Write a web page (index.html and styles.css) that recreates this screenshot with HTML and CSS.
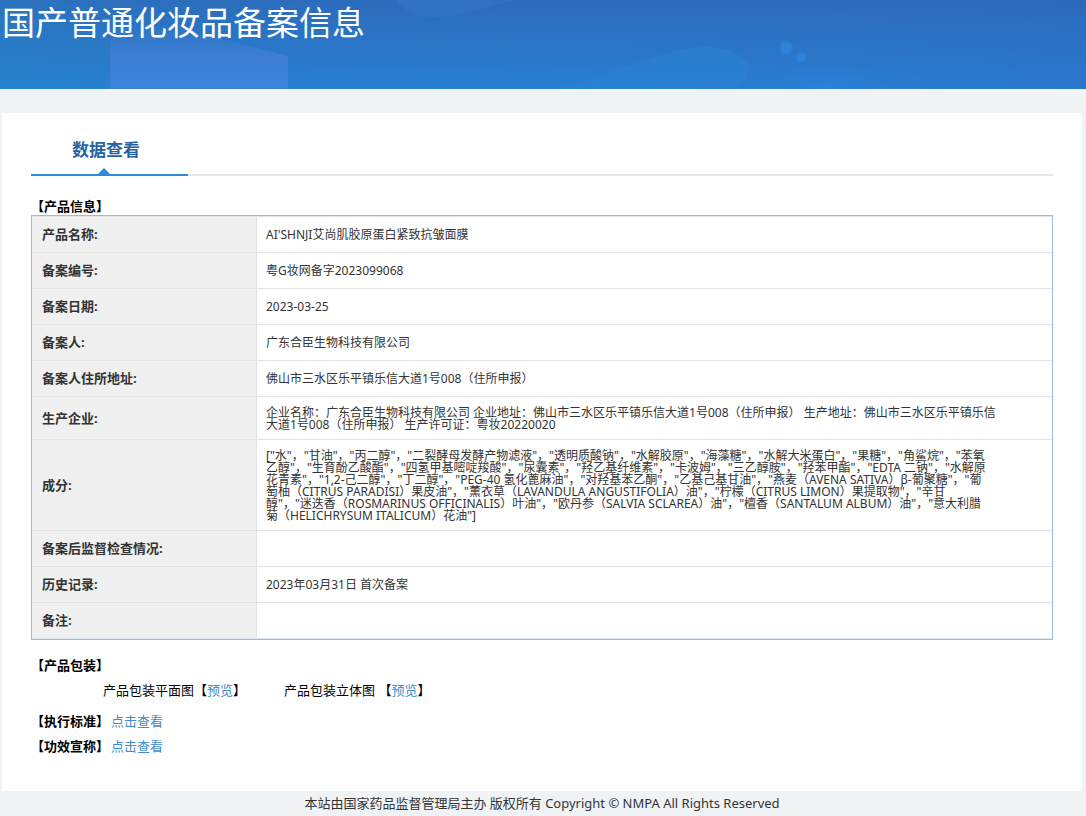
FILE: index.html
```html
<!DOCTYPE html>
<html lang="zh-CN">
<head>
    <meta charset="UTF-8">
    <meta name="viewport" content="width=device-width, initial-scale=1.0">
    <title>国产普通化妆品备案信息</title>
    <link rel="stylesheet" href="styles.css">
</head>
<body>

    <header class="banner">
        <svg class="banner-bg" viewBox="0 0 1086 89" preserveAspectRatio="none" aria-hidden="true">
            <defs>
                <linearGradient id="sky" x1="0" y1="0" x2="0" y2="1">
                    <stop offset="0" stop-color="#2d6abb"/>
                    <stop offset="1" stop-color="#2880d2"/>
                </linearGradient>
                <linearGradient id="shade" x1="0" y1="0" x2="1" y2="0">
                    <stop offset="0" stop-color="#258ac4" stop-opacity="0.25"/>
                    <stop offset="0.4" stop-color="#2a78cc" stop-opacity="0"/>
                    <stop offset="1" stop-color="#2d66c0" stop-opacity="0.3"/>
                </linearGradient>
                <linearGradient id="block" x1="0" y1="0" x2="0" y2="1">
                    <stop offset="0" stop-color="#3c79cc" stop-opacity="0"/>
                    <stop offset="0.5" stop-color="#3c7dd2"/>
                    <stop offset="1" stop-color="#3d83db"/>
                </linearGradient>
                <radialGradient id="glow">
                    <stop offset="0" stop-color="#2d82e0" stop-opacity="0.7"/>
                    <stop offset="1" stop-color="#2d82e0" stop-opacity="0"/>
                </radialGradient>
                <radialGradient id="dot">
                    <stop offset="0.6" stop-color="#2c88de" stop-opacity="0.8"/>
                    <stop offset="1" stop-color="#2c88de" stop-opacity="0"/>
                </radialGradient>
            </defs>
            <rect width="1086" height="89" fill="url(#sky)"/>
            <rect width="1086" height="89" fill="url(#shade)"/>
            <path d="M110 22 L180 28 L288 56 V89 H110 Z" fill="url(#block)"/>
            <path d="M396 0 C406 15 424 18 440 17 C462 16 486 6 515 0 Z" fill="#3a80cc" opacity="0.3"/>
            <path d="M558 89 C610 74 645 59 680 50 C708 43 742 48 748 66 C750 76 742 85 730 89 Z" fill="#2b87d4" opacity="0.4"/>
            <ellipse cx="828" cy="89" rx="55" ry="28" fill="url(#glow)"/>
            <circle cx="786" cy="48" r="8" fill="url(#dot)"/>
            <circle cx="801" cy="57" r="6" fill="url(#dot)"/>
        </svg>
        <h1>国产普通化妆品备案信息</h1>
    </header>

    <main class="panel">
        <div class="tabs">
            <h2 class="tab">数据查看</h2>
        </div>

        <h3>【产品信息】</h3>
        <table class="info">
            <tr><th scope="row">产品名称:</th><td>AI'SHNJI艾尚肌胶原蛋白紧致抗皱面膜</td></tr>
            <tr><th scope="row">备案编号:</th><td>粤G妆网备字2023099068</td></tr>
            <tr><th scope="row">备案日期:</th><td>2023-03-25</td></tr>
            <tr><th scope="row">备案人:</th><td>广东合臣生物科技有限公司</td></tr>
            <tr><th scope="row">备案人住所地址:</th><td>佛山市三水区乐平镇乐信大道1号008（住所申报）</td></tr>
            <tr><th scope="row">生产企业:</th><td class="long">企业名称：广东合臣生物科技有限公司 企业地址：佛山市三水区乐平镇乐信大道1号008（住所申报） 生产地址：佛山市三水区乐平镇乐信<br>大道1号008（住所申报） 生产许可证：粤妆20220020</td></tr>
            <tr>
                <th scope="row">成分:</th>
                <td class="long">["水"，"甘油"，"丙二醇"，"二裂酵母发酵产物滤液"，"透明质酸钠"，"水解胶原"，"海藻糖"，"水解大米蛋白"，"果糖"，"角鲨烷"，"苯氧<br>
                乙醇"，"生育酚乙酸酯"，"四氢甲基嘧啶羧酸"，"尿囊素"，"羟乙基纤维素"，"卡波姆"，"三乙醇胺"，"羟苯甲酯"，"EDTA 二钠"，"水解原<br>
                花青素"，"1,2-己二醇"，"丁二醇"，"PEG-40 氢化蓖麻油"，"对羟基苯乙酮"，"乙基己基甘油"，"燕麦（AVENA SATIVA）β-葡聚糖"，"葡<br>
                萄柚（CITRUS PARADISI）果皮油"，"薰衣草（LAVANDULA ANGUSTIFOLIA）油"，"柠檬（CITRUS LIMON）果提取物"，"辛甘<br>
                醇"，"迷迭香（ROSMARINUS OFFICINALIS）叶油"，"欧丹参（SALVIA SCLAREA）油"，"檀香（SANTALUM ALBUM）油"，"意大利腊<br>
                菊（HELICHRYSUM ITALICUM）花油"]</td>
            </tr>
            <tr><th scope="row">备案后监督检查情况:</th><td></td></tr>
            <tr><th scope="row">历史记录:</th><td>2023年03月31日 首次备案</td></tr>
            <tr><th scope="row">备注:</th><td></td></tr>
        </table>

        <h3 class="package-title">【产品包装】</h3>
        <div class="package">
            <span>产品包装平面图【<a href="#">预览</a>】</span>
            <span>产品包装立体图 【<a href="#">预览</a>】</span>
        </div>
        <div class="line"><b>【执行标准】</b> <a href="#">点击查看</a></div>
        <div class="line"><b>【功效宣称】</b> <a href="#">点击查看</a></div>
    </main>

    <footer>本站由国家药品监督管理局主办 版权所有 Copyright © NMPA All Rights Reserved</footer>

</body>
</html>
```
FILE: styles.css
```css
* { box-sizing: border-box; }
body { margin: 0; background: #eff3f6; color: #000; font-family: "Noto Sans", "Noto Sans CJK SC", sans-serif; font-size: 13px; line-height: 25px; text-spacing-trim: space-all; }
h1, h2, h3 { margin: 0; }
a { color: #428bca; text-decoration: none; }

.banner { position: relative; height: 89px; overflow: hidden; }
.banner-bg { position: absolute; top: 0; left: 0; width: 100%; height: 100%; }
.banner h1 { position: relative; padding-left: 2px; color: #fff; font-size: 33px; font-weight: 400; line-height: 46px; }

.panel { margin: 24px 4px 0 2px; padding: 24px 29px 32px; background: #fff; }
.tabs { display: flex; margin-bottom: 22px; box-shadow: inset 0 -2px #e6e6e6; }
.tab { position: relative; width: 157px; padding: 0 41px 12px; border-bottom: 2px solid #2f8ad8; color: #2563a5; font-size: 17px; line-height: 25px; white-space: nowrap; }
.tab::after { content: ""; position: absolute; left: 67px; bottom: 0; border: 6px solid transparent; border-top-width: 0; border-bottom-color: #2f8ad8; }

h3 { font-size: 13px; line-height: 17px; }
.info { width: 100%; border: 1px solid #9dbbd5; border-spacing: 0; color: #333; }
.info th, .info td { border-top: 1px solid #e2e2e2; vertical-align: middle; text-align: left; }
.info tr:last-child th, .info tr:last-child td { border-bottom: 1px solid #dde8f2; }
.info th { width: 224px; padding: 9px 10px; background: #f0f0f0; font-size: 13px; line-height: 17px; }
.info td { padding: 9px 50px 9px 9px; border-left: 1px solid #e2e2e2; font-size: 12px; line-height: 12px; }
.info td.long { padding-top: 10px; padding-bottom: 8px; }

.package-title { margin-top: 17px; }
.package { display: flex; gap: 38px; margin-bottom: 6px; padding: 4px 0 0 72px; }
.line { display: flex; gap: 2px; }

footer { margin: 0 4px 0 2px; color: #333; text-align: center; }
```
